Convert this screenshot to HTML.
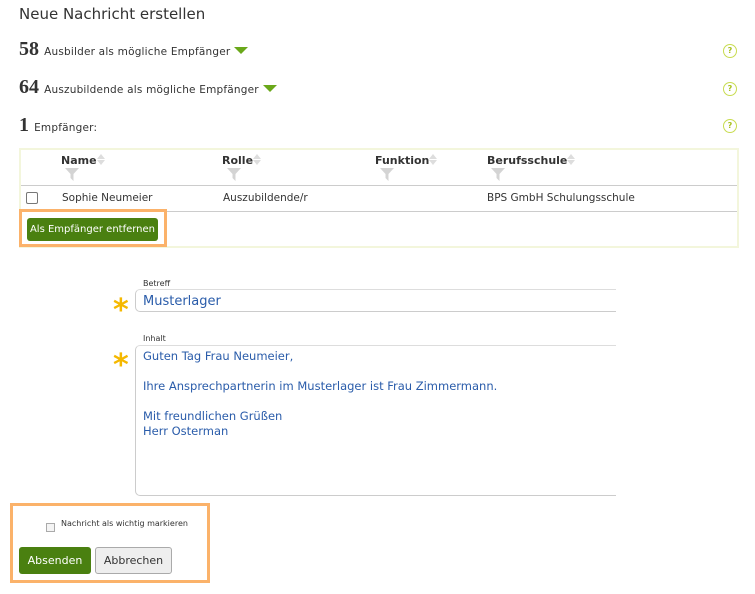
<!DOCTYPE html>
<html><head><meta charset="utf-8"><style>
body{margin:0;width:755px;height:594px;background:#fff;font-family:Verdana,"DejaVu Sans",sans-serif;color:#333;position:relative;overflow:hidden}
.a{position:absolute;white-space:nowrap}
.num{font-family:"Liberation Serif",serif;font-weight:bold;font-size:20px;color:#333}
.sm{font-size:10.5px;letter-spacing:0.2px}
.help{position:absolute;width:12px;height:12px;border:1px solid #c8dc50;border-radius:50%;font-size:8px;color:#a8c020;text-align:center;line-height:12px;font-weight:bold}
.tri{display:inline-block;width:0;height:0;border-left:7px solid transparent;border-right:7px solid transparent;border-top:7px solid #6aa81a;vertical-align:middle;margin-left:4px}
.th{font-weight:bold;font-size:11px;color:#333}
.sort{display:inline-block;width:8px;height:12px;vertical-align:top;position:relative}
.sort:before{content:"";position:absolute;left:0;top:0;border-left:4px solid transparent;border-right:4px solid transparent;border-bottom:5px solid #ddd}
.sort:after{content:"";position:absolute;left:0;top:6px;border-left:4px solid transparent;border-right:4px solid transparent;border-top:5px solid #ddd}
.fil{position:absolute}
.btn{position:absolute;border-radius:3px;font-size:11px;text-align:center;white-space:nowrap}
.star{position:absolute;color:#f5b800;font-size:30px;font-weight:bold;line-height:1}
.blue{color:#2a5caa;font-size:11.5px}
</style></head><body>
<div class="a" style="left:19px;top:5px;font-size:15px;color:#333">Neue Nachricht erstellen</div>

<div class="a" style="left:19px;top:38px"><span class="num">58</span> <span class="sm">Ausbilder als mögliche Empfänger</span><span class="tri"></span></div>
<div class="a" style="left:19px;top:76px"><span class="num">64</span> <span class="sm">Auszubildende als mögliche Empfänger</span><span class="tri"></span></div>
<div class="a" style="left:19px;top:114px"><span class="num">1</span> <span class="sm">Empfänger:</span></div>
<div class="help" style="left:723px;top:44px">?</div>
<div class="help" style="left:723px;top:82px">?</div>
<div class="help" style="left:723px;top:119px">?</div>

<div class="a" style="left:19px;top:148px;width:716px;height:96px;border:2px solid #f3f6dc"></div>
<div class="a" style="left:21px;top:185px;width:716px;height:1px;background:#ccc"></div>
<div class="a" style="left:21px;top:211px;width:716px;height:1px;background:#ccc"></div>
<div class="a th" style="left:61px;top:154px">Name<span class="sort"></span></div>
<div class="a th" style="left:222px;top:154px">Rolle<span class="sort"></span></div>
<div class="a th" style="left:375px;top:154px">Funktion<span class="sort"></span></div>
<div class="a th" style="left:487px;top:154px">Berufsschule<span class="sort"></span></div>
<svg class="fil" style="left:65px;top:168px" width="14" height="13"><path d="M0 0h14L8.5 6v7L5.5 10V6z" fill="#d4d4d4"/></svg>
<svg class="fil" style="left:227px;top:168px" width="14" height="13"><path d="M0 0h14L8.5 6v7L5.5 10V6z" fill="#d4d4d4"/></svg>
<svg class="fil" style="left:380px;top:168px" width="14" height="13"><path d="M0 0h14L8.5 6v7L5.5 10V6z" fill="#d4d4d4"/></svg>
<svg class="fil" style="left:491px;top:168px" width="14" height="13"><path d="M0 0h14L8.5 6v7L5.5 10V6z" fill="#d4d4d4"/></svg>
<div class="a" style="left:26px;top:192px;width:10px;height:10px;border:1px solid #777;border-radius:2px"></div>
<div class="a" style="left:62px;top:192px;font-size:10.5px">Sophie Neumeier</div>
<div class="a" style="left:223px;top:192px;font-size:10.5px">Auszubildende/r</div>
<div class="a" style="left:487px;top:192px;font-size:10.5px">BPS GmbH Schulungsschule</div>

<div class="a" style="left:19px;top:209px;width:142px;height:32px;border:3px solid #fbb26a"></div>
<div class="btn" style="left:27px;top:218px;width:131px;height:23px;line-height:23px;background:#4a8010;color:#fff;font-size:10px">Als Empfänger entfernen</div>

<div class="a" style="left:143px;top:279px;font-size:8px">Betreff</div>
<div class="a" style="left:135px;top:289px;width:480px;height:21px;border-left:1px solid #ccc;border-bottom:1px solid #ccc;border-top:1px solid #ddd;border-radius:5px 0 0 5px"></div>
<div class="a blue" style="left:143px;top:294px;font-size:13px">Musterlager</div>
<div class="star" style="left:113px;top:296px">*</div>

<div class="a" style="left:143px;top:334px;font-size:8px">Inhalt</div>
<div class="a" style="left:135px;top:345px;width:480px;height:149px;border-left:1px solid #ccc;border-bottom:1px solid #ccc;border-top:1px solid #ddd;border-radius:5px 0 0 5px"></div>
<div class="star" style="left:113px;top:351px">*</div>
<div class="a blue" style="left:143px;top:349px;line-height:15px">Guten Tag Frau Neumeier,<br><br>Ihre Ansprechpartnerin im Musterlager ist Frau Zimmermann.<br><br>Mit freundlichen Grüßen<br>Herr Osterman</div>

<div class="a" style="left:10px;top:503px;width:194px;height:74px;border:3px solid #fbb26a"></div>
<div class="a" style="left:46px;top:523px;width:7px;height:7px;border:1px solid #aaa;background:#f4f4f4"></div>
<div class="a" style="left:61px;top:519px;font-size:8px">Nachricht als wichtig markieren</div>
<div class="btn" style="left:19px;top:547px;width:72px;height:27px;line-height:27px;background:#4a8010;color:#fff">Absenden</div>
<div class="btn" style="left:95px;top:547px;width:75px;height:25px;line-height:25px;background:#eee;border:1px solid #aaa;color:#333">Abbrechen</div>
</body></html>
